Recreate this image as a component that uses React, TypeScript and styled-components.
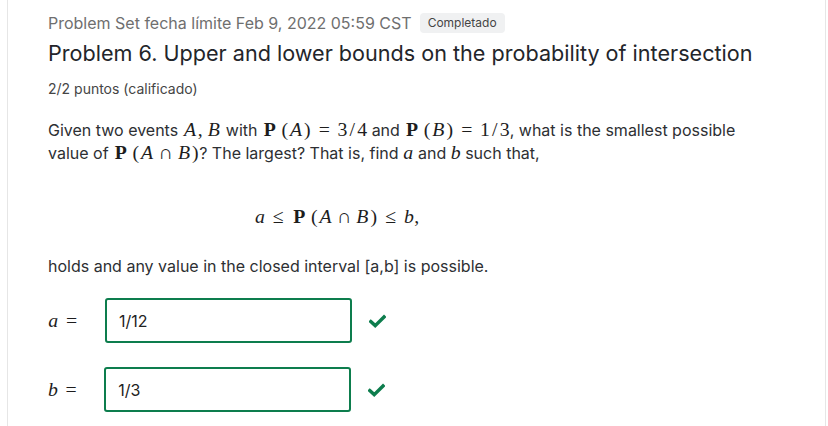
import React from "react";
import styled, { createGlobalStyle } from "styled-components";

const Global = createGlobalStyle`
  html, body { margin: 0; padding: 0; background: #fff; }
  body { font-family: Inter, "Noto Sans", sans-serif; color: #454545; }
`;

const Page = styled.div`
  margin-left: 7px;
  width: 819px;
  height: 426px;
  border-left: 1px solid #e6e6e6;
  border-right: 1px solid #e6e6e6;
  padding: 13px 40px 0 40px;
  box-sizing: border-box;
`;

const MetaRow = styled.div`
  display: flex;
  align-items: center;
  gap: 8px;
  height: 20px;
`;

const Meta = styled.span`
  font-size: 16px;
  color: #6f6f6f;
`;

const Badge = styled.span`
  background: #f0f1f2;
  border-radius: 4px;
  font-size: 12px;
  color: #454545;
  padding: 3px 8px;
  line-height: 14px;
`;

const Title = styled.h2`
  margin: 5px 0 0;
  font-size: 21.6px;
  font-weight: 400;
  line-height: 30px;
  color: #23252a;
`;

const Points = styled.div`
  margin-top: 12px;
  font-size: 14px;
  line-height: 18px;
  color: #454545;
`;

const Para = styled.p<{ $top: number }>`
  margin: ${(p) => p.$top}px 0 0;
  max-width: 720px;
  font-size: 16px;
  line-height: 23px;
  color: #2d2f33;
`;

type Kind = "v" | "b" | "n" | "r" | "o";

const Glyph = styled.span<{ $w: number; $k: Kind; $pre: number }>`
  display: inline-block;
  font-size: 19.8px;
  width: ${(p) => p.$w}em;
  margin-left: ${(p) => p.$pre}em;
  text-align: center;
  font-family: "Liberation Serif", "DejaVu Serif", serif;
  font-style: ${(p) => (p.$k === "v" ? "italic" : "normal")};
  font-weight: ${(p) => (p.$k === "b" ? 700 : 400)};
  line-height: 1;
  color: #1d1d1d;
`;

const WIDTH: Record<string, number> = {
  a: 0.529,
  b: 0.5,
  A: 0.75,
  B: 0.759,
  P: 0.786,
  "(": 0.389,
  ")": 0.389,
  "=": 0.778,
  "≤": 0.778,
  "∩": 0.667,
  "/": 0.5,
  ",": 0.278,
};

const SPACE: Record<Kind, number> = { v: 0, b: 0, n: 0, r: 0.278, o: 0.222 };

type Tok = [string, Kind, number?];

const Math = ({ t }: { t: Tok[] }) => (
  <>
    {t.map(([c, k, pre], i) => (
      <Glyph key={i} $k={k} $pre={pre ?? 0} $w={(WIDTH[c] ?? 0.5) + SPACE[k] * 2}>
        {c}
      </Glyph>
    ))}
  </>
);

const PofA = (x: string): Tok[] => [["P", "b"], ["(", "n", 0.167], [x, "v"], [")", "n"]];

const Display = styled.div`
  margin: 40px 0 0;
  text-align: center;
  width: 578px;
  line-height: 24px;
`;

const Answers = styled.div`
  margin-top: 20px;
  display: flex;
  flex-direction: column;
  gap: 24px;
`;

const AnswerRow = styled.div`
  display: flex;
  align-items: center;
  height: 45px;
`;

const Label = styled.span`
  margin-right: 20px;
  display: inline-flex;
  align-items: baseline;
`;

const Input = styled.div`
  width: 247px;
  height: 45px;
  box-sizing: border-box;
  border: 2px solid #0d7d4d;
  border-radius: 3px;
  padding: 0 12px;
  display: flex;
  align-items: center;
  font-size: 16px;
  color: #222;
`;

const Check = styled.svg`
  margin-left: 17px;
  width: 17px;
  height: 14px;
`;

const CheckIcon = () => (
  <Check viewBox="0 0 17 14">
    <path d="M1.8 7.6 L6.2 11.6 L15 3" fill="none" stroke="#0d7d4d" strokeWidth="3.4" strokeLinecap="square" />
  </Check>
);

export default function App() {
  return (
    <>
      <Global />
      <Page>
        <MetaRow>
          <Meta>Problem Set fecha límite Feb 9, 2022 05:59 CST</Meta>
          <Badge>Completado</Badge>
        </MetaRow>
        <Title>Problem 6. Upper and lower bounds on the probability of intersection</Title>
        <Points>2/2 puntos (calificado)</Points>
        <Para $top={21}>
          {"Given two events "}
          <Math t={[["A", "v"], [",", "n"], ["B", "v", 0.167]]} />
          {" with "}
          <Math t={[...PofA("A"), ["=", "r"], ["3", "n"], ["/", "n"], ["4", "n"]]} />
          {" and "}
          <Math t={[...PofA("B"), ["=", "r"], ["1", "n"], ["/", "n"], ["3", "n"]]} />
          {", what is the smallest possible"}
          {" value of "}
          <Math t={[["P", "b"], ["(", "n", 0.167], ["A", "v"], ["∩", "o"], ["B", "v"], [")", "n"]]} />
          {"? The largest? That is, find "}
          <Math t={[["a", "v"]]} />
          {" and "}
          <Math t={[["b", "v"]]} />
          {" such that,"}
        </Para>
        <Display>
          <Math
            t={[
              ["a", "v"],
              ["≤", "r"],
              ["P", "b"],
              ["(", "n", 0.167],
              ["A", "v"],
              ["∩", "o"],
              ["B", "v"],
              [")", "n"],
              ["≤", "r"],
              ["b", "v"],
              [",", "n"],
            ]}
          />
        </Display>
        <Para $top={26}>holds and any value in the closed interval [a,b] is possible.</Para>
        <Answers>
          <AnswerRow>
            <Label>
              <Math t={[["a", "v"], ["=", "r"]]} />
            </Label>
            <Input>1/12</Input>
            <CheckIcon />
          </AnswerRow>
          <AnswerRow>
            <Label>
              <Math t={[["b", "v"], ["=", "r"]]} />
            </Label>
            <Input>1/3</Input>
            <CheckIcon />
          </AnswerRow>
        </Answers>
      </Page>
    </>
  );
}
